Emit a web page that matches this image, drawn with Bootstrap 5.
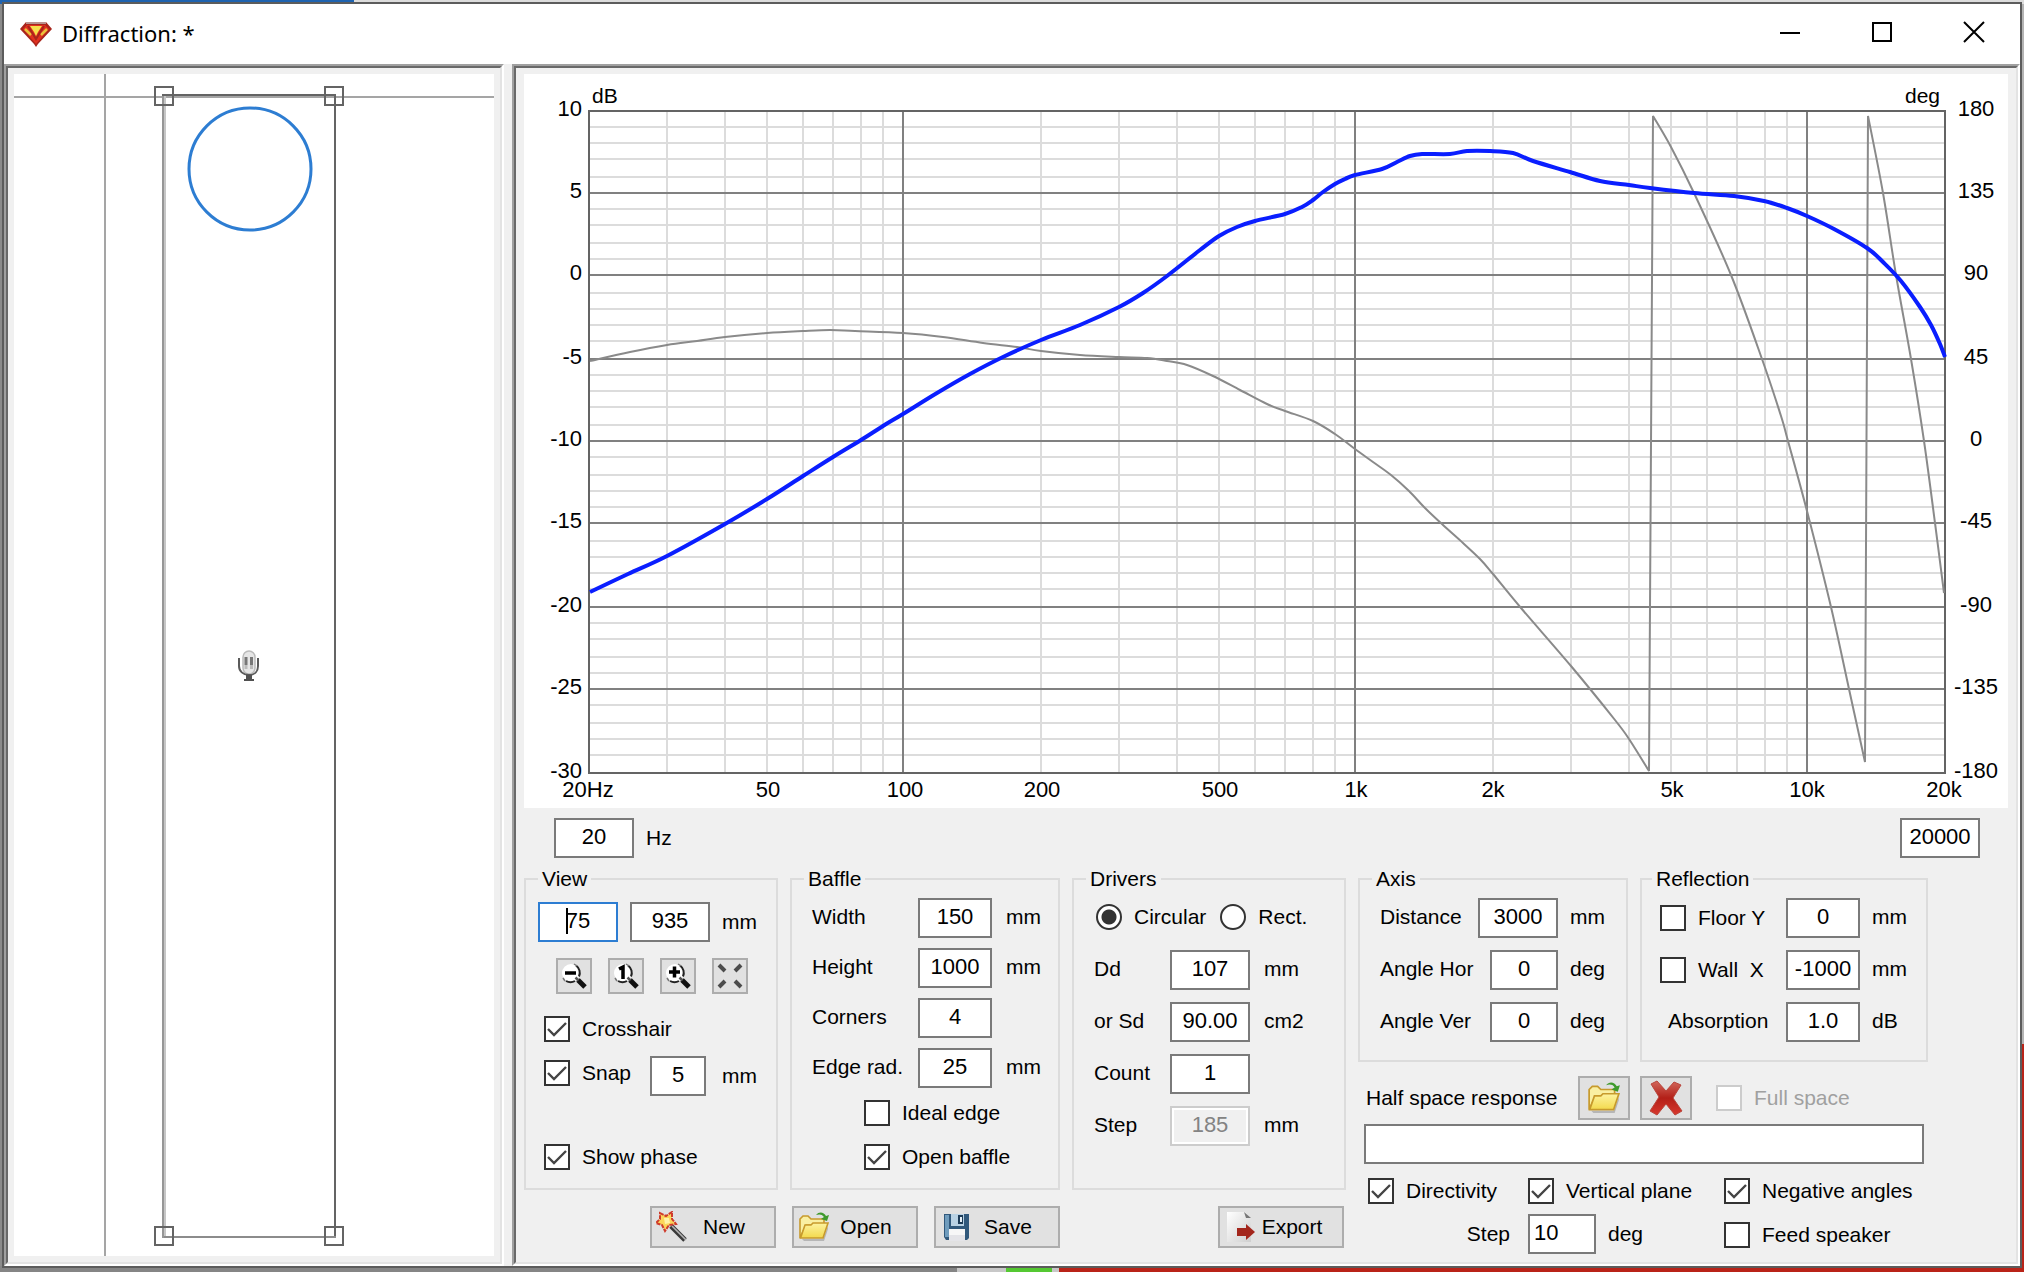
<!DOCTYPE html>
<html lang="en">
<head>
<meta charset="utf-8">
<meta name="viewport" content="width=device-width, initial-scale=1">
<title>Diffraction</title>
<link rel="stylesheet" href="https://cdn.jsdelivr.net/npm/bootstrap@5.3.0/dist/css/bootstrap.min.css">
<style>
  :root { --face: #f0f0f0; --line: #dcdcdc; --edge: #7a7a7a; }
  body {
    font: 21px/24px "Liberation Sans", Arial, sans-serif; color: #000;
    padding: 2px 2px 4px;
    background:
      linear-gradient(90deg, #1f63b0 354px, #dcdcdc 354px) 0 0 / 100% 4px no-repeat,
      linear-gradient(90deg, #858585 957px, #c8c8c8 957px 1006px, #55c832 1006px 1052px, #c8c8c8 1052px 1059px, #b92318 1059px) 0 100% / 100% 6px no-repeat,
      linear-gradient(#b4b4b4 1044px, #b92318 1044px) 100% 0 / 4px 100% no-repeat,
      #8b8b8b;
  }
  .win { border: 2px solid #5c5c5c; background: var(--face); }
  .titlebar { height: 60px; background: #fff; padding-left: 16px; }
  .titlebar h1 { font: 22px/30px "Noto Sans", sans-serif; margin: 0 0 2px 10px; }
  .winbtn { width: 92px; height: 60px; padding: 0 0 4px; border: 0; background: none; line-height: 0; }
  .pane { border: 2px solid; border-color: #a0a0a0 #fff #fff #a0a0a0; min-width: 0; }
  .pane-in { border: 2px solid; border-color: #696969 #e3e3e3 #e3e3e3 #696969; padding: 6px; height: 100%; }
  .pane-plan { flex: 0 0 500px; }
  .pane-main .pane-in { padding-left: 8px; padding-right: 8px; }
  svg { display: block; }
  .plot { background: #fff; width: 100%; height: auto; }
  .plot text { font-size: 22px; }
  .plot text.unit { font-size: 21px; }
  .phase { fill: none; stroke: #8a8a8a; stroke-width: 2; stroke-linejoin: bevel; }
  .level { fill: none; stroke: #0a1eff; stroke-width: 4; stroke-linejoin: round; }

  .controls { padding-top: 10px; }
  .freq { padding: 0 28px 0 30px; margin-bottom: 10px; }
  .grp { border: 2px solid var(--line); padding: 0 0 0 20px; min-width: 0; }
  .grp legend { float: none; width: auto; font-size: 21px; line-height: 22px; margin: 0 0 0 -8px; padding: 0 4px; }
  .g-view { width: 254px; padding-left: 12px; }
  .g-view legend { margin-left: 0; }
  .g-baffle { width: 270px; }
  .g-drivers { width: 274px; }
  .g-axis { width: 270px; }
  .g-refl { width: 288px; padding-left: 18px; }
  .tall { min-height: 322px; }
  .short { min-height: 194px; }
  .gap12 { gap: 12px; }
  .gap10 { gap: 10px; }
  .side { width: 570px; }

  .view-pos { padding-top: 12px; }
  .view-tools { margin: 16px 0 22px 18px; }
  .view-opts { padding-left: 6px; }
  .view-opts .snap-row { margin: 14px 0 48px; }
  .snap-unit { width: 54px; }
  .baffle-opts { padding: 12px 0 0 52px; display: grid; row-gap: 18px; }
  .shape-row { padding: 14px 0 20px 2px; gap: 14px; }
  .file-row { padding: 0 2px 0 126px; }
  .resp-row { padding: 14px 0 4px 8px; }
  .resp-cap { width: 202px; }
  .resp-full { margin-left: 14px; }
  .resp-file { padding: 0 4px 14px 6px; }

  .box {
    height: 40px; border: 2px solid var(--edge); border-radius: 0; background: #fff; color: #000;
    font-size: 22px; line-height: 34px; padding: 0 0 2px; text-align: center; flex: none;
  }
  .box:focus { outline: 0; border-color: #2d7dd2; }
  .box:disabled { background: var(--face); border-color: #ccc; color: #838383; box-shadow: inset 0 0 0 2px #fff; }
  .box.active-box { border-color: #2d7dd2; background: linear-gradient(#000, #000) 26px 4px / 2px 26px no-repeat #fff; }
  .w56 { width: 56px; } .w68 { width: 68px; } .w74 { width: 74px; } .w80 { width: 80px; }
  .fld { display: flex; align-items: center; height: 40px; }
  .fld .cap { flex: none; padding-bottom: 2px; }
  .fld .un { margin-left: 14px; padding-bottom: 2px; }
  .side .fld .un { margin-left: 12px; }
  .cap-baffle { width: 106px; }
  .cap-drivers { width: 76px; }
  .cap-axis { width: 98px; }
  .cap-angle { width: 110px; }
  .cap-refl { width: 126px; }

  .tick { display: flex; align-items: center; height: 26px; gap: 12px; white-space: nowrap; }
  .tick input { appearance: none; flex: none; width: 26px; height: 26px; margin: 0; border: 2px solid #333; background: #fff; }
  .tick input[type=checkbox]:checked {
    background: #fff url("data:image/svg+xml,%3Csvg xmlns='http://www.w3.org/2000/svg' viewBox='0 0 22 22'%3E%3Cpath d='M2 11l6 6L20 5' fill='none' stroke='%23444' stroke-width='2.4'/%3E%3C/svg%3E") center / 22px;
  }
  .tick input[type=radio] { border-radius: 50%; }
  .tick input[type=radio]:checked { background: radial-gradient(circle, #333 7px, #fff 8px); }
  .tick input:disabled { border-color: #ccc; }
  .tick input:disabled + span { color: #a0a0a0; }

  .push { border: 2px solid #adadad; border-radius: 0; background: #e1e1e1; color: #000; padding: 0; font-size: 21px; line-height: 24px; display: flex; align-items: center; }
  .push:hover { background: #e5f1fb; color: #000; border-color: #0078d7; }
  .push-tool { width: 36px; height: 36px; justify-content: center; }
  .push-file { width: 126px; height: 42px; padding-left: 4px; }
  .push-file span { flex: 1; text-align: center; padding-right: 14px; }
  .push-sq { width: 52px; height: 44px; justify-content: center; }
  .checks { display: grid; grid-template-columns: 160px 196px 1fr; padding-left: 10px; row-gap: 10px; }
  .checks .step-cap { padding-right: 18px; }
</style>
</head>
<body class="d-flex min-vh-100">

<svg width="0" height="0" class="position-absolute" aria-hidden="true">
  <defs>
    <linearGradient id="gold" x1="0" y1="0" x2="0" y2="1"><stop offset="0" stop-color="#fdf3a0"/><stop offset="1" stop-color="#f3d94c"/></linearGradient>
    <linearGradient id="sheet" x1="0" y1="0" x2="1" y2="1"><stop offset="0" stop-color="#fff"/><stop offset="1" stop-color="#cfcfcf"/></linearGradient>
    <linearGradient id="ruby" x1="0" y1="0" x2="0" y2="1"><stop offset="0" stop-color="#d2685c"/><stop offset=".5" stop-color="#b32018"/><stop offset="1" stop-color="#d8382e"/></linearGradient>
    <symbol id="folder" viewBox="0 0 32 32">
      <path d="M4 28h21l5-13v3l-4 12H6z" fill="#9a9a9a" opacity=".6"/>
      <path d="M2 27V8l3-3h5l3 3h13v6H8z" fill="#f9efa2" stroke="#c79a2c" stroke-width="1.6"/>
      <path d="M2.500 27L7 14h6l2-2h15l-5 15z" fill="url(#gold)" stroke="#c79a2c" stroke-width="1.6"/>
      <path d="M18 4c3-4 8-3 10 1l3-1-2 6-6-2 3-2c-2-3-5-3-8-2z" fill="#3f9a2c"/>
    </symbol>
    <symbol id="lens" viewBox="0 0 28 28">
      <circle cx="11" cy="11" r="9" fill="#fff"/>
      <path d="M16 3.500a9 9 0 0 1 3 11M6 19a9 9 0 0 0 9 0" fill="none" stroke="#222" stroke-width="2"/>
      <path d="M3 16l2 3M14 2l3 2" stroke="#777" stroke-width="1.500"/>
      <path d="M18 18l7 7" stroke="#111" stroke-width="5"/>
      <path d="M15.500 15.500l3 3" stroke="#555" stroke-width="2.500"/>
    </symbol>
  </defs>
</svg>

<main class="win flex-grow-1 d-flex flex-column">
  <header class="titlebar d-flex align-items-center">
    <svg width="32" height="32" viewBox="0 0 32 32" aria-hidden="true">
      <path d="M6 4h20l6 7-14 15-2 3-2-3L0 11z" fill="#a8251c"/>
      <path d="M6 4h20v2H6z" fill="#b9928e"/>
      <path d="M7 7l18 0 4 4-13 15L3 11z" fill="#e2301f"/>
      <path d="M10 8h12l-4 6h-4z" fill="#f6e04c"/>
      <path d="M5 11l6 6M27 11l-6 6" stroke="#e8c33c" stroke-width="2.500"/>
      <path d="M8 8l8 13 8-13" fill="none" stroke="#a8251c" stroke-width="2"/>
      <path d="M14 14h4l-2 4z" fill="#f6e04c"/>
    </svg>
    <h1 class="me-auto">Diffraction: *</h1>
    <button class="winbtn" type="button" aria-label="Minimize"><svg class="mx-auto" width="22" height="22" viewBox="0 0 22 22"><path d="M1 12h20" stroke="#000" stroke-width="2"/></svg></button>
    <button class="winbtn" type="button" aria-label="Maximize"><svg class="mx-auto" width="22" height="22" viewBox="0 0 22 22"><path d="M2 2h18v18H2z" fill="none" stroke="#000" stroke-width="2"/></svg></button>
    <button class="winbtn" type="button" aria-label="Close"><svg class="mx-auto" width="22" height="22" viewBox="0 0 22 22"><path d="M1 1l20 20M21 1L1 21" stroke="#000" stroke-width="2"/></svg></button>
  </header>

  <div class="d-flex flex-grow-1 gap-2">
    <section class="pane pane-plan" aria-label="Baffle plan">
      <div class="pane-in">
        <svg class="plot" viewBox="14 74 480 1182">
          <path d="M105 74V1256M14 97H494" stroke="#a5a5a5" stroke-width="2"/>
          <path d="M163 95V1238" stroke="#969696" stroke-width="2"/>
          <path d="M165 96V1236" stroke="#c6c6c6" stroke-width="2"/>
          <path d="M162 95H335V1238" fill="none" stroke="#646464" stroke-width="2"/>
          <path d="M164 1237H336" stroke="#8c8c8c" stroke-width="2"/>
          <g fill="none" stroke="#646464" stroke-width="2">
            <rect x="155" y="87" width="18" height="18"/><rect x="325" y="87" width="18" height="18"/>
            <rect x="155" y="1227" width="18" height="18"/><rect x="325" y="1227" width="18" height="18"/>
          </g>
          <circle cx="250" cy="169" r="61" fill="none" stroke="#2d7dd2" stroke-width="3"/>
          <g>
            <rect x="243" y="651" width="12" height="23" rx="6" fill="#e6e6e6" stroke="#bbb" stroke-width="1.500"/>
            <path d="M246 657v8M251.500 657v8" stroke="#777" stroke-width="3"/>
            <path d="M246 665v4M251.500 665v4" stroke="#bbb" stroke-width="3"/>
            <path d="M239 658v8c0 5 4 9 10 9s9-4 9-9v-8" fill="none" stroke="#5a5a5a" stroke-width="2"/>
            <path d="M246 675h6v4h2v2h-10v-2h2z" fill="#505050"/>
          </g>
        </svg>
      </div>
    </section>

    <section class="pane pane-main flex-grow-1" aria-label="Response">
      <div class="pane-in">
        <svg class="plot" viewBox="524 74 1484 734">
          <path stroke="#dcdcdc" stroke-width="2" d="M667 111V773M725 111V773M767 111V773M803 111V773M833 111V773M861 111V773M883 111V773M1041 111V773M1119 111V773M1177 111V773M1219 111V773M1255 111V773M1285 111V773M1313 111V773M1335 111V773M1493 111V773M1571 111V773M1629 111V773M1671 111V773M1707 111V773M1737 111V773M1765 111V773M1787 111V773
            M589 127H1945M589 143H1945M589 159H1945M589 177H1945M589 209H1945M589 225H1945M589 243H1945M589 259H1945M589 293H1945M589 309H1945M589 325H1945M589 341H1945M589 375H1945M589 391H1945M589 407H1945M589 425H1945M589 457H1945M589 475H1945M589 491H1945M589 507H1945M589 541H1945M589 557H1945M589 573H1945M589 589H1945M589 623H1945M589 639H1945M589 657H1945M589 673H1945M589 705H1945M589 723H1945M589 739H1945M589 755H1945"/>
          <path stroke="#808080" stroke-width="2" d="M903 111V773M1355 111V773M1807 111V773M589 193H1945M589 275H1945M589 359H1945M589 441H1945M589 523H1945M589 607H1945M589 689H1945"/>
          <path fill="none" stroke="#646464" stroke-width="2" d="M589 111H1945V773H589Z"/>
          <path id="phase" class="phase"/>
          <path id="level" class="level"/>
          <text class="unit" x="592" y="103">dB</text><text class="unit" x="1940" y="103" text-anchor="end">deg</text>
          <g text-anchor="end">
            <text x="582" y="116">10</text><text x="582" y="198">5</text><text x="582" y="280">0</text><text x="582" y="364">-5</text>
            <text x="582" y="446">-10</text><text x="582" y="528">-15</text><text x="582" y="612">-20</text><text x="582" y="694">-25</text><text x="582" y="778">-30</text>
          </g>
          <g text-anchor="middle">
            <text x="1976" y="116">180</text><text x="1976" y="198">135</text><text x="1976" y="280">90</text><text x="1976" y="364">45</text>
            <text x="1976" y="446">0</text><text x="1976" y="528">-45</text><text x="1976" y="612">-90</text><text x="1976" y="694">-135</text><text x="1976" y="778">-180</text>
            <text x="588" y="797">20Hz</text><text x="768" y="797">50</text><text x="905" y="797">100</text><text x="1042" y="797">200</text>
            <text x="1220" y="797">500</text><text x="1356" y="797">1k</text><text x="1493" y="797">2k</text><text x="1672" y="797">5k</text>
            <text x="1807" y="797">10k</text><text x="1944" y="797">20k</text>
          </g>
        </svg>

        <form class="controls">
          <div class="freq d-flex align-items-center gap12">
            <input id="fmin" class="box w80" value="20"><label for="fmin" class="me-auto">Hz</label>
            <input class="box w80" value="20000" aria-label="Maximum frequency">
          </div>

          <div class="d-flex align-items-start gap12">
            <div>
              <div class="d-flex gap12">
                <fieldset class="grp g-view tall">
                  <legend>View</legend>
                  <div class="view-pos d-flex gap12 align-items-center">
                    <input id="vx" class="box w80 active-box" value="75" aria-label="View X"><input id="vy" class="box w80" value="935" aria-label="View Y"><label for="vy">mm</label>
                  </div>
                  <div class="view-tools d-flex gap-3">
                    <button type="button" class="btn push push-tool" aria-label="Zoom out"><svg width="28" height="28" viewBox="0 0 28 28"><use href="#lens"/><path d="M5 11h11" stroke="#000" stroke-width="3.500"/></svg></button>
                    <button type="button" class="btn push push-tool" aria-label="Actual size"><svg width="28" height="28" viewBox="0 0 28 28"><use href="#lens"/><path d="M7 7l4-2v12" fill="none" stroke="#000" stroke-width="3.500"/></svg></button>
                    <button type="button" class="btn push push-tool" aria-label="Zoom in"><svg width="28" height="28" viewBox="0 0 28 28"><use href="#lens"/><path d="M5 10h11M10.500 4.500v11" stroke="#000" stroke-width="3.500"/></svg></button>
                    <button type="button" class="btn push push-tool" aria-label="Fit"><svg width="28" height="28" viewBox="0 0 28 28"><path d="M3 3l6 6M25 3l-6 6M3 25l6-6M25 25l-6-6" stroke="#4c4c4c" stroke-width="4"/></svg></button>
                  </div>
                  <div class="view-opts">
                    <label class="tick"><input type="checkbox" checked><span>Crosshair</span></label>
                    <div class="snap-row d-flex align-items-start">
                      <label class="tick mt-1 me-auto"><input type="checkbox" checked><span>Snap</span></label>
                      <input id="snap" class="box w56" value="5" aria-label="Snap step"><label for="snap" class="snap-unit mt-2 ms-3">mm</label>
                    </div>
                    <label class="tick"><input type="checkbox" checked><span>Show phase</span></label>
                  </div>
                </fieldset>

                <fieldset class="grp g-baffle tall">
                  <legend>Baffle</legend>
                  <div class="d-flex flex-column gap10 pt-2">
                    <div class="fld"><label class="cap cap-baffle" for="bw">Width</label><input id="bw" class="box w74" value="150"><span class="un">mm</span></div>
                    <div class="fld"><label class="cap cap-baffle" for="bh">Height</label><input id="bh" class="box w74" value="1000"><span class="un">mm</span></div>
                    <div class="fld"><label class="cap cap-baffle" for="bc">Corners</label><input id="bc" class="box w74" value="4"></div>
                    <div class="fld"><label class="cap cap-baffle" for="be">Edge rad.</label><input id="be" class="box w74" value="25"><span class="un">mm</span></div>
                  </div>
                  <div class="baffle-opts">
                    <label class="tick"><input type="checkbox"><span>Ideal edge</span></label>
                    <label class="tick"><input type="checkbox" checked><span>Open baffle</span></label>
                  </div>
                </fieldset>

                <fieldset class="grp g-drivers tall">
                  <legend>Drivers</legend>
                  <div class="shape-row d-flex">
                    <label class="tick gap10"><input type="radio" name="shape" checked><span>Circular</span></label>
                    <label class="tick"><input type="radio" name="shape"><span>Rect.</span></label>
                  </div>
                  <div class="d-flex flex-column gap12">
                    <div class="fld"><label class="cap cap-drivers" for="dd">Dd</label><input id="dd" class="box w80" value="107"><span class="un">mm</span></div>
                    <div class="fld"><label class="cap cap-drivers" for="sd">or Sd</label><input id="sd" class="box w80" value="90.00"><span class="un">cm2</span></div>
                    <div class="fld"><label class="cap cap-drivers" for="cn">Count</label><input id="cn" class="box w80" value="1"></div>
                    <div class="fld"><label class="cap cap-drivers" for="st">Step</label><input id="st" class="box w80" value="185" disabled><span class="un">mm</span></div>
                  </div>
                </fieldset>
              </div>

              <div class="file-row d-flex gap-3 mt-3">
                <button type="button" class="btn push push-file">
                  <svg width="32" height="32" viewBox="0 0 32 32" aria-hidden="true"><path d="M15 15l14 14" stroke="#3a3a3a" stroke-width="5"/><path d="M16 15l14 14" stroke="#b5b5b5" stroke-width="1.600"/><path d="M4 2l6 3 6-4 0 7 4 5-7 1-4 6-3-6-6-2 4-4z" fill="#fbd65a" stroke="#cf3b2b" stroke-width="2" stroke-dasharray="4 1"/><path d="M8 7l5 0 1 5-5 1z" fill="#fff3a8"/></svg>
                  <span>New</span></button>
                <button type="button" class="btn push push-file"><svg width="32" height="32" aria-hidden="true"><use href="#folder"/></svg><span>Open</span></button>
                <button type="button" class="btn push push-file">
                  <svg width="32" height="32" viewBox="0 0 32 32" aria-hidden="true"><path d="M4 3h25v24l-2 2H6l-2-3z" fill="#31597c"/><path d="M5 4h4v22H5z" fill="#6f9cbd"/><path d="M11 3h13v12H11z" fill="#b9d2e4"/><path d="M18 4h5v9h-5z" fill="#1d3c58"/><path d="M20 6h2v5h-2z" fill="#e8f2f9"/><path d="M9 18h16v12H9z" fill="#f7f7f7"/><path d="M9 24h16v6H9z" fill="#e4e4e8"/></svg>
                  <span>Save</span></button>
                <button type="button" class="btn push push-file ms-auto">
                  <svg width="32" height="32" viewBox="0 0 32 32" aria-hidden="true"><path d="M3 1h18l6 6v24H3z" fill="url(#sheet)"/><path d="M20 1l7 6h-5z" fill="#777"/><path d="M13 17h9v-4l9 8-9 8v-4h-9z" fill="#a3261c"/></svg>
                  <span>Export</span></button>
              </div>
            </div>

            <div class="side">
              <div class="d-flex gap12">
                <fieldset class="grp g-axis short">
                  <legend>Axis</legend>
                  <div class="d-flex flex-column gap12 pt-2">
                    <div class="fld"><label class="cap cap-axis" for="ad">Distance</label><input id="ad" class="box w80" value="3000"><span class="un">mm</span></div>
                    <div class="fld"><label class="cap cap-angle" for="ah">Angle Hor</label><input id="ah" class="box w68" value="0"><span class="un">deg</span></div>
                    <div class="fld"><label class="cap cap-angle" for="av">Angle Ver</label><input id="av" class="box w68" value="0"><span class="un">deg</span></div>
                  </div>
                </fieldset>
                <fieldset class="grp g-refl short">
                  <legend>Reflection</legend>
                  <div class="d-flex flex-column gap12 pt-2">
                    <div class="fld"><label class="tick cap-refl"><input type="checkbox"><span>Floor Y</span></label><input class="box w74" value="0" aria-label="Floor Y"><span class="un">mm</span></div>
                    <div class="fld"><label class="tick cap-refl"><input type="checkbox"><span>Wall&nbsp; X</span></label><input class="box w74" value="-1000" aria-label="Wall X"><span class="un">mm</span></div>
                    <div class="fld"><label class="cap cap-refl ps-2" for="ab">Absorption</label><input id="ab" class="box w74" value="1.0"><span class="un">dB</span></div>
                  </div>
                </fieldset>
              </div>

              <div class="resp-row d-flex align-items-center gap10">
                <label for="half" class="resp-cap">Half space response</label>
                <button type="button" class="btn push push-sq" aria-label="Open response"><svg width="34" height="34" aria-hidden="true"><use href="#folder"/></svg></button>
                <button type="button" class="btn push push-sq" aria-label="Clear response"><svg width="36" height="36" viewBox="0 0 36 36" aria-hidden="true"><path d="M3 4l6-3 9 10 8-9 7 3-8 13 9 13-7 4-9-11-9 11-7-4 9-14z" fill="url(#ruby)" stroke="#b9463c" stroke-width="1"/></svg></button>
                <label class="resp-full tick"><input type="checkbox" disabled><span>Full space</span></label>
              </div>
              <div class="resp-file"><input id="half" class="box w-100 d-block"></div>
              <div class="checks">
                <label class="tick"><input type="checkbox" checked><span>Directivity</span></label>
                <label class="tick"><input type="checkbox" checked><span>Vertical plane</span></label>
                <label class="tick"><input type="checkbox" checked><span>Negative angles</span></label>
                <label for="dstep" class="step-cap text-end align-self-center">Step</label>
                <div class="d-flex align-items-center gap12"><input id="dstep" class="box w68 text-start ps-1" value="10"><label for="dstep">deg</label></div>
                <label class="tick mt-2"><input type="checkbox"><span>Feed speaker</span></label>
              </div>
            </div>
          </div>
        </form>
      </div>
    </section>
  </div>
</main>

<script src="https://cdn.jsdelivr.net/npm/bootstrap@5.3.0/dist/js/bootstrap.bundle.min.js"></script>
<script>
  // Sampled response, one list per continuous run, as x,y pairs in plot units.
  const level = [[590,592, 628,574, 667,556, 725,524, 767,499, 803,476, 833,457, 861,440, 883,426, 903,414, 937,393, 970,374, 1003,357, 1041,340, 1080,325, 1119,307, 1143,293, 1167,276, 1200,250, 1219,236, 1237,227, 1255,221, 1285,214, 1302,207, 1313,200, 1323,192, 1335,184, 1345,179, 1355,175, 1382,169, 1397,162, 1410,156, 1422,154, 1450,154, 1467,151, 1490,151, 1513,153, 1533,161, 1570,172, 1600,181, 1629,185, 1650,188, 1694,193, 1734,196, 1764,201, 1787,208, 1807,216, 1834,229, 1867,248, 1884,263, 1901,281, 1920,307, 1931,325, 1940,344, 1945,357]];
  const phase = [
    [590,361, 630,352, 667,345, 697,341, 725,337, 767,333, 803,331, 830,330, 855,331, 903,333, 943,337, 983,343, 1017,347, 1041,351, 1080,355, 1119,357, 1147,358, 1167,361, 1187,365, 1213,376, 1240,390, 1267,404, 1285,411, 1313,421, 1335,434, 1355,449, 1373,462, 1391,475, 1409,491, 1425,508, 1443,525, 1463,543, 1480,559, 1493,574, 1521,608, 1571,666, 1615,720, 1629,739, 1649,771],
    [1653,116, 1671,147, 1694,193, 1731,275, 1762,359, 1781,416, 1788,441, 1807,511, 1831,607, 1849,689, 1865,762],
    [1868,116, 1883,193, 1896,275, 1911,359, 1924,441, 1935,523, 1944,593]
  ];
  function spline(runs) {
    return runs.map((r, k) => {
      const n = r.length / 2, p = i => { i = Math.max(0, Math.min(n - 1, i)); return [r[2 * i], r[2 * i + 1]]; };
      let d = (k ? 'L' : 'M') + p(0);
      for (let i = 0; i < n - 1; i++) {
        const [a, b, c, e] = [p(i - 1), p(i), p(i + 1), p(i + 2)];
        d += 'C' + [b[0] + (c[0] - a[0]) / 6, b[1] + (c[1] - a[1]) / 6, c[0] - (e[0] - b[0]) / 6, c[1] - (e[1] - b[1]) / 6, c[0], c[1]];
      }
      return d;
    }).join('');
  }
  document.getElementById('level').setAttribute('d', spline(level));
  document.getElementById('phase').setAttribute('d', spline(phase));
</script>
</body>
</html>
